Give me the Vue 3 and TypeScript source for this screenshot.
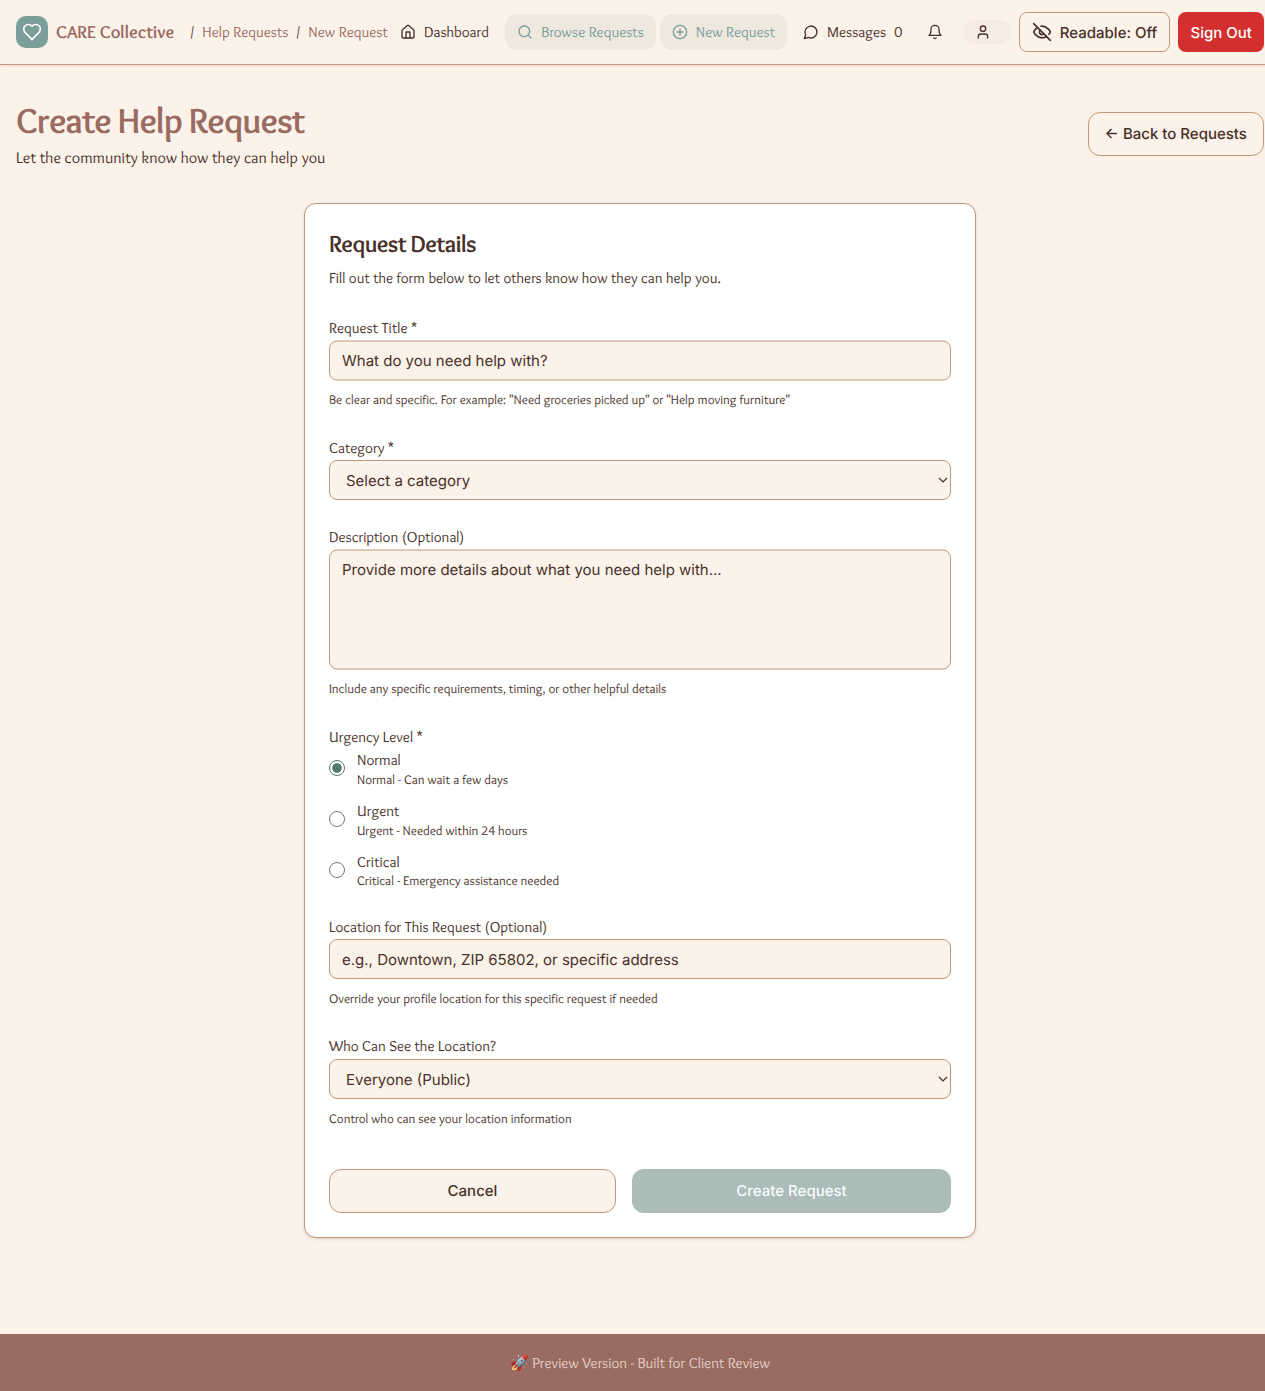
<script setup lang="ts">
import { ref } from 'vue'

interface Urgency {
  value: string
  label: string
  note: string
}

const urgencies: Urgency[] = [
  { value: 'normal', label: 'Normal', note: 'Normal - Can wait a few days' },
  { value: 'urgent', label: 'Urgent', note: 'Urgent - Needed within 24 hours' },
  { value: 'critical', label: 'Critical', note: 'Critical - Emergency assistance needed' },
]

const urgency = ref('normal')
const title = ref('')
const category = ref('')
const description = ref('')
const place = ref('')
const visibility = ref('public')
</script>

<template>
  <div class="viewport">
    <div class="page">
      <header class="bar">
        <div class="logo">
          <svg class="icon" width="20" height="20" viewBox="0 0 24 24"><path d="M19 14c1.49-1.46 3-3.21 3-5.5A5.5 5.5 0 0 0 16.5 3c-1.76 0-3 .5-4.5 2-1.5-1.5-2.74-2-4.5-2A5.5 5.5 0 0 0 2 8.5c0 2.3 1.5 4.05 3 5.5l7 7Z" /></svg>
        </div>
        <span class="brand">CARE Collective</span>
        <nav class="crumbs">
          <span class="slash">/</span>
          <a>Help Requests</a>
          <span class="slash">/</span>
          <a>New Request</a>
        </nav>
        <nav class="links">
          <a class="link dash">
            <svg class="icon" width="16" height="16" viewBox="0 0 24 24"><path d="M15 21v-8a1 1 0 0 0-1-1h-4a1 1 0 0 0-1 1v8" /><path d="M3 10a2 2 0 0 1 .709-1.528l7-5.999a2 2 0 0 1 2.582 0l7 5.999A2 2 0 0 1 21 10v9a2 2 0 0 1-2 2H5a2 2 0 0 1-2-2z" /></svg>
            <span>Dashboard</span>
          </a>
          <a class="link pill browse">
            <svg class="icon" width="16" height="16" viewBox="0 0 24 24"><circle cx="11" cy="11" r="8" /><path d="m21 21-4.3-4.3" /></svg>
            <span>Browse Requests</span>
          </a>
          <a class="link pill create">
            <svg class="icon" width="16" height="16" viewBox="0 0 24 24"><circle cx="12" cy="12" r="10" /><path d="M8 12h8M12 8v8" /></svg>
            <span>New Request</span>
          </a>
          <a class="link messages">
            <svg class="icon" width="16" height="16" viewBox="0 0 24 24"><path d="M7.9 20A9 9 0 1 0 4 16.1L2 22Z" /></svg>
            <span>Messages</span>
            <span>0</span>
          </a>
        </nav>
        <div class="tools">
          <svg class="icon" width="16" height="16" viewBox="0 0 24 24"><path d="M6 8a6 6 0 0 1 12 0c0 7 3 9 3 9H3s3-2 3-9" /><path d="M10.3 21a1.94 1.94 0 0 0 3.4 0" /></svg>
          <div class="user">
            <svg class="icon" width="16" height="16" viewBox="0 0 24 24"><path d="M19 21v-2a4 4 0 0 0-4-4H9a4 4 0 0 0-4 4v2" /><circle cx="12" cy="7" r="4" /></svg>
          </div>
          <button class="btn readable">
            <svg class="icon" width="20" height="20" viewBox="0 0 24 24"><path d="M9.88 9.88a3 3 0 1 0 4.24 4.24" /><path d="M10.73 5.08A10.43 10.43 0 0 1 12 5c7 0 10 7 10 7a13.16 13.16 0 0 1-1.67 2.68" /><path d="M6.61 6.61A13.526 13.526 0 0 0 2 12s3 7 10 7a9.74 9.74 0 0 0 5.39-1.61" /><path d="m2 2 20 20" /></svg>
            <span>Readable: Off</span>
          </button>
          <button class="btn signout">Sign Out</button>
        </div>
      </header>

      <main>
        <div class="heading">
          <div>
            <h1>Create Help Request</h1>
            <p>Let the community know how they can help you</p>
          </div>
          <button class="btn back">← Back to Requests</button>
        </div>

        <form class="card" @submit.prevent>
          <h2>Request Details</h2>
          <p class="intro">Fill out the form below to let others know how they can help you.</p>

          <div class="field f-title">
            <label>Request Title *</label>
            <input v-model="title" class="control half" placeholder="What do you need help with?" />
            <p class="hint">Be clear and specific. For example: "Need groceries picked up" or "Help moving furniture"</p>
          </div>

          <div class="field f-category">
            <label>Category *</label>
            <div class="select">
              <select v-model="category" class="control"><option value="">Select a category</option></select>
              <svg class="chevron" width="10" height="6" viewBox="0 0 10 6"><path d="M1 1l4 4 4-4" /></svg>
            </div>
          </div>

          <div class="field f-description">
            <label>Description (Optional)</label>
            <textarea v-model="description" class="control half" placeholder="Provide more details about what you need help with..."></textarea>
            <p class="hint">Include any specific requirements, timing, or other helpful details</p>
          </div>

          <div class="field f-urgency">
            <label>Urgency Level *</label>
            <div class="options">
              <label v-for="u in urgencies" :key="u.value" class="option">
                <input v-model="urgency" type="radio" name="urgency" :value="u.value" />
                <span class="copy">
                  <span class="row">{{ u.label }}</span>
                  <span class="row note">{{ u.note }}</span>
                </span>
              </label>
            </div>
          </div>

          <div class="field f-location">
            <label>Location for This Request (Optional)</label>
            <input v-model="place" class="control" placeholder="e.g., Downtown, ZIP 65802, or specific address" />
            <p class="hint">Override your profile location for this specific request if needed</p>
          </div>

          <div class="field f-visibility">
            <label>Who Can See the Location?</label>
            <div class="select">
              <select v-model="visibility" class="control"><option value="public">Everyone (Public)</option></select>
              <svg class="chevron" width="10" height="6" viewBox="0 0 10 6"><path d="M1 1l4 4 4-4" /></svg>
            </div>
            <p class="hint">Control who can see your location information</p>
          </div>

          <div class="actions">
            <button type="button" class="btn cancel">Cancel</button>
            <button type="submit" class="btn submit" disabled>Create Request</button>
          </div>
        </form>
      </main>

      <footer>🚀 Preview Version - Built for Client Review</footer>
    </div>
  </div>
</template>

<style>
body {
  margin: 0;
  background: #fbf2e9;
}
</style>

<style scoped>
* {
  box-sizing: border-box;
  text-rendering: geometricPrecision;
}
.viewport {
  overflow: hidden;
}
.page {
  width: 1280px;
  height: 1391px;
  display: flex;
  flex-direction: column;
  background: #fbf2e9;
  color: #483129;
  font: 15px/20px Overlock, Lato, sans-serif;
  white-space: nowrap;
}
.icon {
  flex: none;
  fill: none;
  stroke: currentColor;
  stroke-width: 2;
  stroke-linecap: round;
  stroke-linejoin: round;
}
h1,
h2,
p {
  margin: 0;
}
.bar {
  height: 65px;
  flex: none;
  display: flex;
  align-items: center;
  padding: 0 16px;
  border-bottom: 1px solid #c39778;
  box-shadow: 0 1px 2px rgba(0, 0, 0, 0.12);
}
.logo {
  width: 32px;
  height: 32px;
  margin-right: 8px;
  display: flex;
  align-items: center;
  justify-content: center;
  border-radius: 10px;
  background: #7a9e99;
  color: #fff;
}
.brand {
  color: #9a6b61;
  font-size: 18px;
  font-weight: 700;
}
.crumbs {
  display: flex;
  margin-left: 16px;
  color: #9a6b61;
}
.slash {
  width: 4px;
  margin-right: 8px;
  color: #483129;
}
.crumbs a + .slash {
  margin-left: 8px;
}
.links,
.link,
.tools {
  display: flex;
  align-items: center;
}
.link {
  gap: 8px;
  height: 36px;
}
.dash {
  margin-left: 12.2px;
}
.pill {
  border-radius: 12px;
  background: #eee8df;
  color: #7a9e99;
}
.browse {
  width: 150.5px;
  padding-left: 12px;
  margin-left: 16.2px;
}
.create {
  width: 127.5px;
  padding-left: 12px;
  margin-left: 4px;
}
.messages {
  margin-left: 15.8px;
}
.tools {
  margin-left: auto;
}
.user {
  width: 48px;
  height: 24px;
  margin: 0 8px 0 20px;
  padding: 4px 12px;
  border-radius: 12px;
  background: #f5ebe2;
}
.user .icon {
  display: block;
}
.btn {
  display: flex;
  align-items: center;
  justify-content: center;
  flex: none;
  padding: 0;
  border: 1px solid #c39778;
  border-radius: 12px;
  background: #fbf2e9;
  color: #483129;
  font: 500 15px/20px Inter, sans-serif;
}
.readable {
  width: 151.5px;
  height: 40px;
  gap: 8px;
  border-radius: 8px;
}
.signout {
  width: 85.7px;
  height: 40px;
  margin-left: 8px;
  border: 0;
  border-radius: 8px;
  background: #d32f2f;
  color: #fff;
}
.readable,
.signout {
  padding-top: 1px;
}
.readable .icon {
  margin-top: -1px;
}
main {
  flex: 1;
}
.heading {
  display: flex;
  justify-content: space-between;
  align-items: center;
  height: 74px;
  margin: 32px 16px 0;
}
h1 {
  height: 45px;
  color: #9a6b61;
  font-size: 36px;
  font-weight: 700;
  letter-spacing: -0.025em;
  line-height: 44px;
}
.heading p {
  height: 26px;
  font-size: 16px;
  line-height: 30px;
}
.back {
  width: 176.5px;
  height: 44px;
}
.card {
  width: 672px;
  height: 1035px;
  margin: 32px auto 0;
  padding: 24px;
  border: 1px solid #c39778;
  border-radius: 12px;
  background: #fff;
  box-shadow: 0 1px 3px rgba(0, 0, 0, 0.14);
}
h2 {
  height: 32px;
  font-size: 24px;
  font-weight: 700;
  letter-spacing: -0.025em;
  line-height: 34px;
}
.intro {
  margin-top: 8px;
}
.field > label {
  display: block;
  height: 20px;
}
.f-title {
  margin-top: 30px;
}
.control {
  display: block;
  width: 100%;
  height: 40px;
  margin: 2px 0 0;
  padding: 1px 12px 0;
  border: 1px solid #c39778;
  border-radius: 8px;
  outline: 0;
  background: #fbf2e9;
  color: #483129;
  font: 15px/24px Inter, sans-serif;
  resize: none;
}
.half {
  padding-top: 0;
  padding-bottom: 1px;
  transform: translateY(0.5px);
}
.control::placeholder {
  color: #483129;
  opacity: 1;
}
.select {
  position: relative;
}
select.control {
  padding: 2px 16px 0;
  appearance: none;
}
.chevron {
  position: absolute;
  right: 3.5px;
  top: calc(50% - 3px);
  fill: none;
  stroke: #483129;
  stroke-width: 1.2;
}
textarea.control {
  height: 120px;
  padding-top: 7px;
}
.hint {
  margin-top: 10px;
  font-size: 13px;
}
.f-category {
  margin-top: 28px;
}
.f-description {
  margin-top: 27px;
}
.f-urgency {
  margin-top: 28px;
}
.options {
  display: flex;
  flex-direction: column;
  gap: 10.8px;
  margin-top: 3px;
}
.option {
  display: flex;
  height: 40px;
}
.option input {
  flex: none;
  width: 16px;
  height: 16px;
  margin: 10.5px 12px 0 0;
  accent-color: #527a70;
}
.option:first-child input {
  margin-top: 10.4px;
}
.row {
  display: block;
}
.note {
  font-size: 13px;
  line-height: 21px;
}
.option:last-child .note {
  line-height: 19.4px;
}
.f-location {
  margin-top: 25.4px;
}
.f-visibility {
  margin-top: 27px;
}
.f-visibility .control {
  margin-top: 3px;
}
.actions {
  display: flex;
  gap: 16px;
  margin-top: 40px;
}
.actions .btn {
  height: 44px;
}
.cancel {
  width: 287px;
}
.submit {
  width: 319px;
  border: 0;
  background: #abbcb9;
  color: #f8faf9;
}
footer {
  flex: none;
  height: 57px;
  background: #9a6b61;
  color: #e2cfc7;
  text-align: center;
  line-height: 58px;
}
</style>
